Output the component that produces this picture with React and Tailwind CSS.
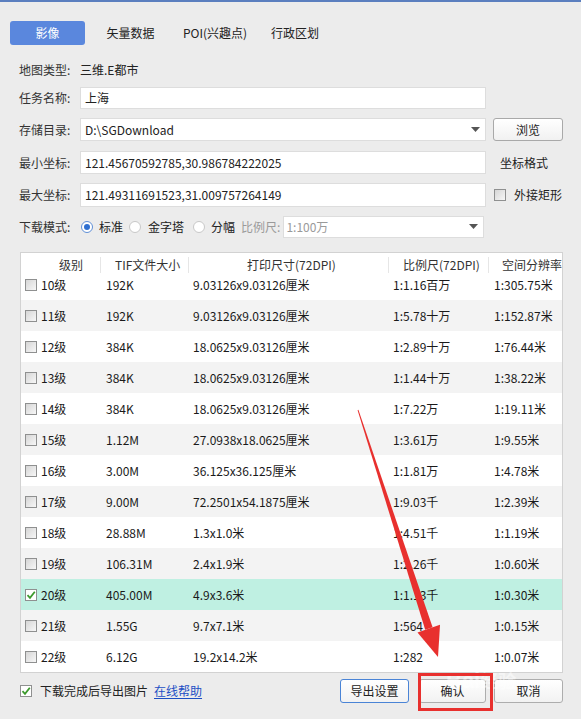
import React from "react";

const rows = [
  ["10级", "192K", "9.03126x9.03126厘米", "1:1.16百万", "1:305.75米"],
  ["11级", "192K", "9.03126x9.03126厘米", "1:5.78十万", "1:152.87米"],
  ["12级", "384K", "18.0625x9.03126厘米", "1:2.89十万", "1:76.44米"],
  ["13级", "384K", "18.0625x9.03126厘米", "1:1.44十万", "1:38.22米"],
  ["14级", "384K", "18.0625x9.03126厘米", "1:7.22万", "1:19.11米"],
  ["15级", "1.12M", "27.0938x18.0625厘米", "1:3.61万", "1:9.55米"],
  ["16级", "3.00M", "36.125x36.125厘米", "1:1.81万", "1:4.78米"],
  ["17级", "9.00M", "72.2501x54.1875厘米", "1:9.03千", "1:2.39米"],
  ["18级", "28.88M", "1.3x1.0米", "1:4.51千", "1:1.19米"],
  ["19级", "106.31M", "2.4x1.9米", "1:2.26千", "1:0.60米"],
  ["20级", "405.00M", "4.9x3.6米", "1:1.13千", "1:0.30米"],
  ["21级", "1.55G", "9.7x7.1米", "1:564", "1:0.15米"],
  ["22级", "6.12G", "19.2x14.2米", "1:282", "1:0.07米"],
];

function Cb({ checked }) {
  return (
    <span
      className={
        "w-[12px] h-[12px] shrink-0 border border-[#8f9090] flex items-center justify-center " +
        (checked ? "bg-white" : "bg-linear-to-br from-[#d6d6d6] to-[#f7f7f7]")
      }
    >
      {checked && (
        <svg width="10" height="10" viewBox="0 0 10 10">
          <path d="M1.5 5.2 L4 7.8 L8.8 1.8" fill="none" stroke="#3c9a2c" strokeWidth="1.8" />
        </svg>
      )}
    </span>
  );
}

function Radio({ on }) {
  return (
    <span
      className={
        "w-[12px] h-[12px] rounded-full border flex items-center justify-center bg-white shrink-0 " +
        (on ? "border-[#5f8fd6]" : "border-[#c8c8c8]")
      }
    >
      {on && <span className="w-[6px] h-[6px] rounded-full bg-[#2f6fd0]" />}
    </span>
  );
}

function Caret() {
  return (
    <svg width="9" height="6" viewBox="0 0 9 6" className="shrink-0">
      <path d="M0 0 L9 0 L4.5 5 Z" fill="#555" />
    </svg>
  );
}

function Sep() {
  return <span className="w-px h-[16px] bg-[#e6e6e6] shrink-0" />;
}

export default function App() {
  return (
    <div className="relative w-[581px] h-[719px] overflow-hidden bg-[#ececec] border-t-2 border-[#5b7fbf] font-['Noto_Sans_CJK_SC',sans-serif] text-[12px] text-[#222] leading-none">
      {/* tabs */}
      <div className="flex items-center pt-[19px] pl-[10px]">
        <div className="w-[75px] h-[24px] rounded-[3px] bg-[#5a87dd] text-white flex items-center justify-center">
          影像
        </div>
        <div className="w-[81px] h-[24px] flex items-center justify-center ml-[5px]">矢量数据</div>
        <div className="w-[88px] h-[24px] flex items-center justify-center">POI(兴趣点)</div>
        <div className="w-[72px] h-[24px] flex items-center justify-center">行政区划</div>
      </div>

      {/* form */}
      <div className="pl-[19px] flex flex-col">
        <div className="flex items-center h-[20px] mt-[15px]">
          <span className="w-[61px] text-[#333]">地图类型:</span>
          <span>三维.E都市</span>
        </div>
        <div className="flex items-center mt-[7px]">
          <span className="w-[61px] text-[#333]">任务名称:</span>
          <div className="w-[406px] h-[22px] bg-white border border-[#dddddd] flex items-center pl-[4px]">上海</div>
        </div>
        <div className="flex items-center mt-[9px]">
          <span className="w-[61px] text-[#333]">存储目录:</span>
          <div className="w-[406px] h-[23px] bg-white border border-[#dddddd] flex items-center justify-between pl-[4px] pr-[5px]">
            <span>D:\SGDownload</span>
            <Caret />
          </div>
          <button className="ml-[7px] w-[70px] h-[23px] border border-[#a9a9a9] rounded-[3px] bg-linear-to-b from-white to-[#f1f1f1] flex items-center justify-center text-[12px]">
            浏览
          </button>
        </div>
        <div className="flex items-center mt-[10px]">
          <span className="w-[61px] text-[#333]">最小坐标:</span>
          <div className="w-[406px] h-[23px] bg-white border border-[#dddddd] flex items-center pl-[4px]">
            121.45670592785,30.986784222025
          </div>
          <span className="ml-[14px]">坐标格式</span>
        </div>
        <div className="flex items-center mt-[9px]">
          <span className="w-[61px] text-[#333]">最大坐标:</span>
          <div className="w-[406px] h-[24px] bg-white border border-[#dddddd] flex items-center pl-[4px]">
            121.49311691523,31.009757264149
          </div>
          <span className="ml-[8px]">
            <Cb />
          </span>
          <span className="ml-[8px]">外接矩形</span>
        </div>
        <div className="flex items-center mt-[9px]">
          <span className="w-[61px] text-[#333]">下载模式:</span>
          <span className="ml-[1px]">
            <Radio on />
          </span>
          <span className="ml-[6px]">标准</span>
          <span className="ml-[6px]">
            <Radio />
          </span>
          <span className="ml-[7px]">金字塔</span>
          <span className="ml-[9px]">
            <Radio />
          </span>
          <span className="ml-[6px]">分幅</span>
          <span className="ml-[6px] text-[#9a9a9a]">比例尺:</span>
          <div className="ml-[3px] w-[201px] h-[22px] bg-white border border-[#dddddd] flex items-center justify-between pl-[2px] pr-[5px] text-[#9a9a9a]">
            <span>1:100万</span>
            <Caret />
          </div>
        </div>
      </div>

      {/* table */}
      <div className="pl-[20px] pr-[18px] mt-[14px]">
        <div className="w-full h-[421px] bg-white border border-[#d2d2d2] flex flex-col overflow-hidden">
          <div className="h-[24px] shrink-0 flex items-center text-[#333] bg-white relative z-10 whitespace-nowrap overflow-hidden">
            <span className="w-[79px] shrink-0 pl-[38px]">级别</span>
            <Sep />
            <span className="w-[87px] shrink-0 pl-[14px]">TIF文件大小</span>
            <Sep />
            <span className="w-[199px] shrink-0 pl-[58px]">打印尺寸(72DPI)</span>
            <Sep />
            <span className="w-[99px] shrink-0 pl-[14px]">比例尺(72DPI)</span>
            <Sep />
            <span className="min-w-0 pl-[13px]">空间分辨率</span>
          </div>
          <div className="flex-1 overflow-hidden">
            <div className="-mt-[8px] flex flex-col">
              {rows.map((r, i) => {
                const sel = r[0] === "20级";
                const bg = sel ? "bg-[#bff0e2]" : i % 2 === 1 ? "bg-[#f3f3f3]" : "bg-white";
                return (
                  <div key={r[0]} className={"h-[31px] shrink-0 flex items-center whitespace-nowrap overflow-hidden text-[#1a1a1a] " + bg}>
                    <span className="w-[80px] shrink-0 pl-[4px] flex items-center gap-[4px]">
                      <Cb checked={sel} />
                      <span>{r[0]}</span>
                    </span>
                    <span className="w-[88px] shrink-0 pl-[5px]">{r[1]}</span>
                    <span className="w-[200px] shrink-0 pl-[4px]">{r[2]}</span>
                    <span className="w-[100px] shrink-0 pl-[4px]">{r[3]}</span>
                    <span className="min-w-0 pl-[5px]">{r[4]}</span>
                  </div>
                );
              })}
            </div>
          </div>
        </div>
      </div>

      {/* bottom */}
      <div className="flex items-center mt-[6px] pl-[20px]">
        <Cb checked />
        <span className="ml-[8px] text-[#222]">下载完成后导出图片</span>
        <span className="ml-[6px] text-[#1d4fc4] underline underline-offset-2">在线帮助</span>
        <div className="ml-auto mr-[18px] flex items-center">
          <button className="w-[69px] h-[24px] border border-[#4a84d6] rounded-[3px] bg-linear-to-b from-white to-[#f2f2f2] flex items-center justify-center text-[12px]">
            导出设置
          </button>
          <button className="ml-[10px] w-[67px] h-[24px] border border-[#adadad] rounded-[3px] bg-linear-to-b from-white to-[#f2f2f2] flex items-center justify-center text-[12px]">
            确认
          </button>
          <button className="ml-[8px] w-[69px] h-[24px] border border-[#adadad] rounded-[3px] bg-linear-to-b from-white to-[#f2f2f2] flex items-center justify-center text-[12px]">
            取消
          </button>
        </div>
      </div>

      {/* watermark */}
      <div className="absolute left-[446px] top-[668px] text-[22px] font-bold text-white/50 font-['Liberation_Sans',sans-serif] pointer-events-none">
        Bai<span className="font-['Noto_Sans_CJK_SC',sans-serif] text-[18px]">经验</span>
      </div>

      {/* red annotation box */}
      <div className="absolute left-[418px] top-[671px] w-[75px] h-[38px] border-[3px] border-[#e8302e] pointer-events-none" />

      {/* red arrow */}
      <svg className="absolute left-0 top-0 pointer-events-none" width="581" height="719" viewBox="0 0 581 719">
        <polygon points="357.6,408.2 358.4,407.8 432.6,625.3 425.2,627.8" fill="#e8302e" />
        <polygon points="417.5,630.5 440,622.8 438,655" fill="#e8302e" />
      </svg>
    </div>
  );
}
